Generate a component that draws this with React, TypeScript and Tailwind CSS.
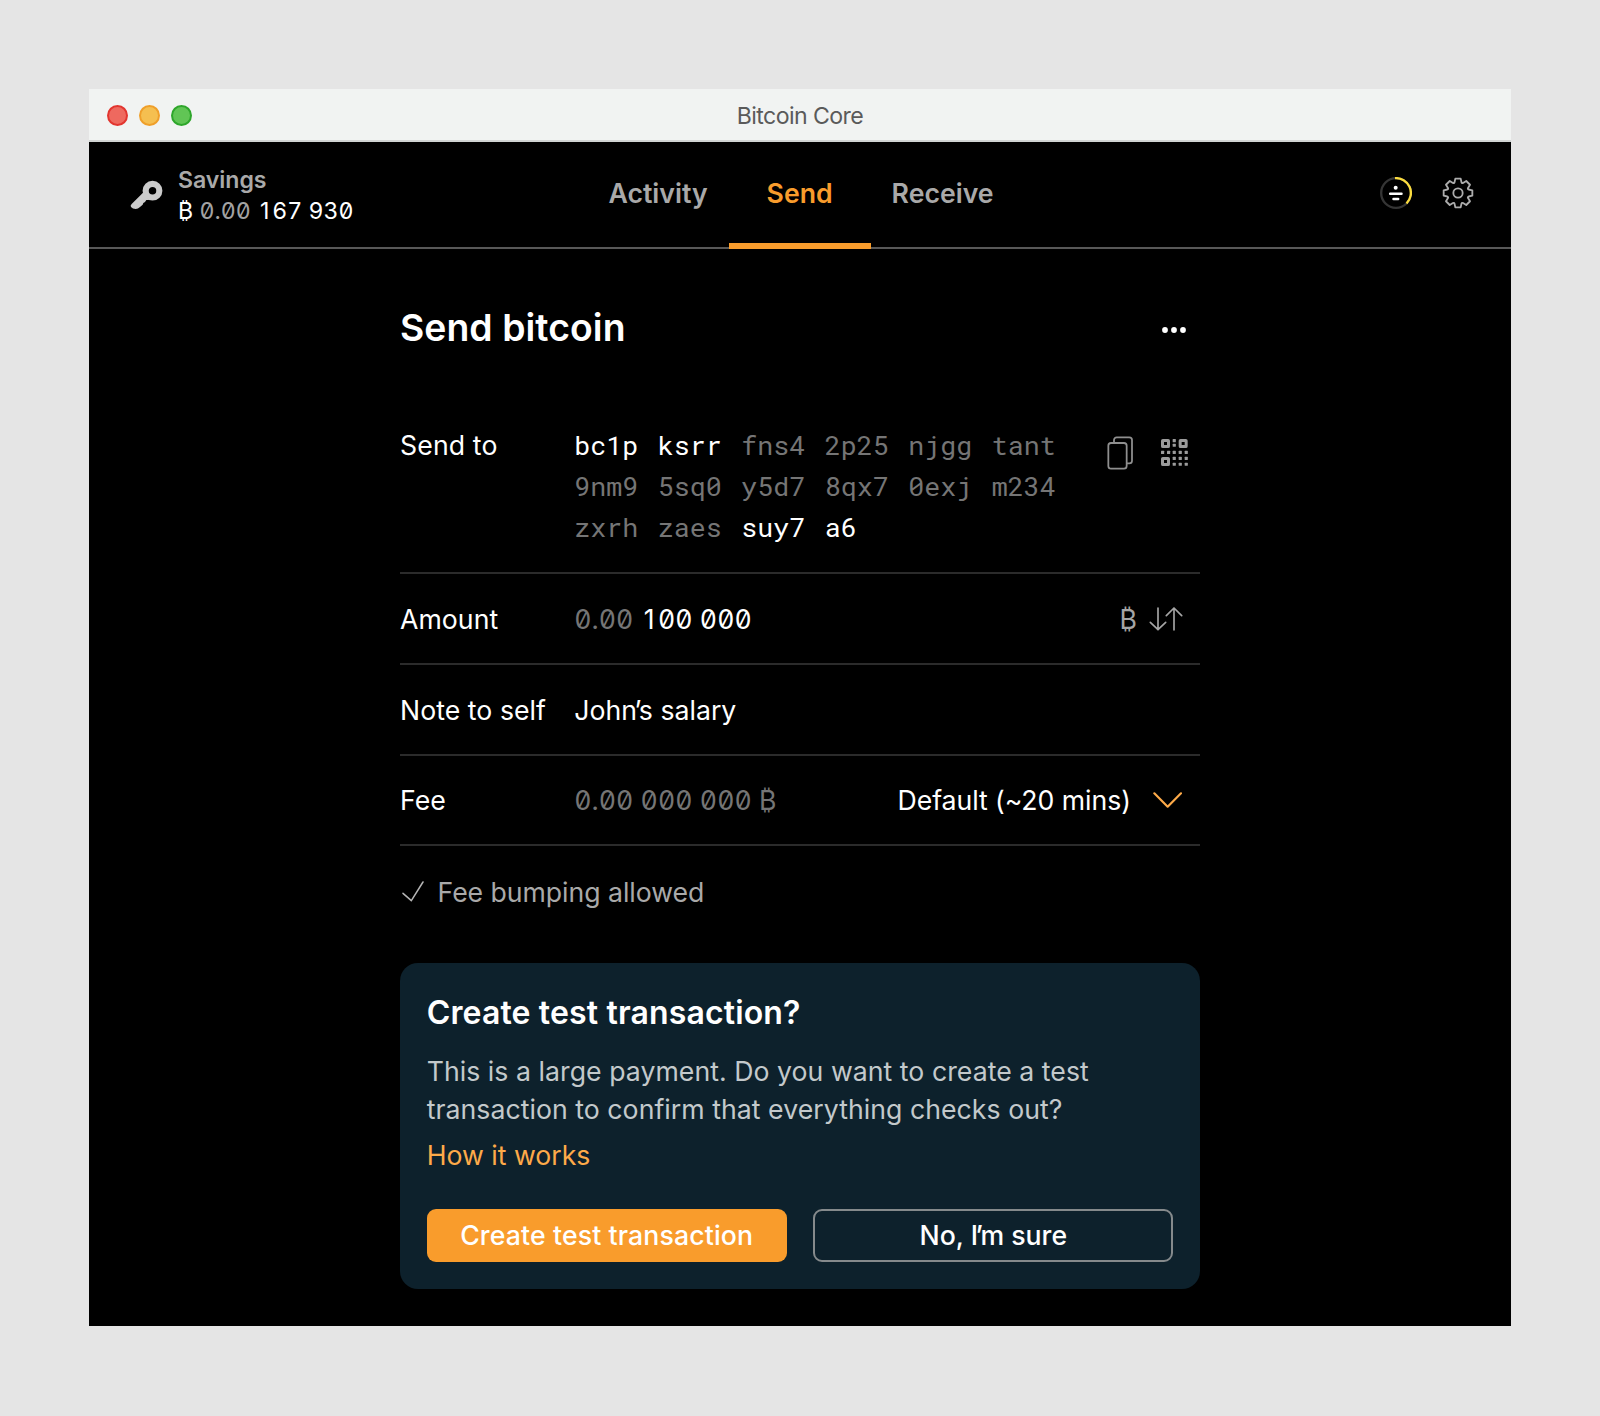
import type { ReactNode } from "react";

const trafficLights = [
  "bg-[#ee695f] border-[#e2352f]",
  "bg-[#f5bf50] border-[#ef9f2a]",
  "bg-[#61c555] border-[#2ea62b]",
];

const addressLines = [
  [["bc1p ksrr", true], ["fns4 2p25 njgg tant", false]],
  [["9nm9 5sq0 y5d7 8qx7 0exj m234", false]],
  [["zxrh zaes", false], ["suy7 a6", true]],
] as [string, boolean][][];

function KeyIcon() {
  return (
    <svg className="h-[30px] w-[34px]" viewBox="0 0 102 90" fill="#cbcbcb">
      <circle cx="67.500" cy="32" r="20.500" fill="none" stroke="#cbcbcb" strokeWidth="18.500" />
      <path d="M39 38L5 72Q0 77 3 81 8 87 17 87 24 87 30 81L38 74 40 69 45 66 49 60 58 60 50 52 42 30Z" />
    </svg>
  );
}

function SyncIcon() {
  return (
    <svg className="size-8" viewBox="0 0 96 96" fill="none" strokeLinecap="round">
      <circle cx="48" cy="48" r="44.500" stroke="#353535" strokeWidth="7" />
      <path d="M45 3.500a44.500 44.500 0 0 1 34.500 76" stroke="#fbdc3f" strokeWidth="7" strokeLinecap="butt" />
      <circle cx="47" cy="32" r="6" fill="#fff" />
      <path d="M30.500 50h34M40.500 66h14" stroke="#fff" strokeWidth="7.500" />
    </svg>
  );
}

const rotate = (x: number, y: number, degrees: number) => {
  const r = (degrees * Math.PI) / 180;
  return `${(x * Math.cos(r) - y * Math.sin(r)).toFixed(2)} ${(x * Math.sin(r) + y * Math.cos(r)).toFixed(2)}`;
};

const gearOutline =
  [0, 45, 90, 135, 180, 225, 270, 315]
    .map(
      (a, i) =>
        `${i ? "L" : "M"}${rotate(-8, -43, a)}L${rotate(8, -43, a)}L${rotate(10.5, -32, a)}Q${rotate(11.8, -28.5, a)} ${rotate(-10.5, -32, a + 45)}`,
    )
    .join("") + "Z";

function GearIcon() {
  return (
    <svg className="size-8" viewBox="-48 -48 96 96" fill="none" stroke="#acacac" strokeWidth="5.500" strokeLinejoin="round">
      <path d={gearOutline} />
      <circle r="14" />
    </svg>
  );
}

function MoreIcon() {
  return (
    <svg className="h-[6px] w-6" viewBox="0 0 24 6" fill="#fff">
      <circle cx="3" cy="3" r="2.900" />
      <circle cx="12" cy="3" r="2.900" />
      <circle cx="21" cy="3" r="2.900" />
    </svg>
  );
}

function CopyIcon() {
  return (
    <svg className="h-[34px] w-[26px]" viewBox="0 0 78 102" fill="none" stroke="#8f8f8f" strokeWidth="5.300">
      <rect x="4" y="21" width="55" height="77" rx="8" />
      <path d="M21 20v-8a8 8 0 0 1 8-8h38a8 8 0 0 1 8 8v62a8 8 0 0 1-8 8h-7" />
    </svg>
  );
}

const qrFinders = [[0, 0], [53, 0], [0, 54]];
const qrDots = [
  [35, 0], [35, 14],
  [0, 35.5], [18, 35.5], [35, 35.5], [53, 35.5], [71, 35.5],
  [35, 53.5], [53, 53.5], [71, 53.5],
  [35, 71], [53, 71], [71, 71],
];

function QrIcon() {
  return (
    <svg className="size-[27px]" viewBox="0 0 81 81">
      {qrFinders.map(([x, y]) => (
        <rect key={`${x}-${y}`} x={x + 4.5} y={y + 4.5} width="18" height="18" rx="1" fill="none" stroke="#9b9b9b" strokeWidth="9" strokeLinejoin="round" />
      ))}
      {qrDots.map(([x, y]) => (
        <rect key={`${x}-${y}`} x={x} y={y} width="9.500" height="9.500" rx="1.500" fill="#9b9b9b" />
      ))}
    </svg>
  );
}

function SwapIcon() {
  return (
    <svg className="h-6 w-[34px]" viewBox="0 0 102 72" fill="none" stroke="#a5a5a5" strokeWidth="5" strokeLinecap="round" strokeLinejoin="round">
      <path d="M27 3v65M4 46l23 22 23-22M75 69V3M52 26L75 3l23 23" />
    </svg>
  );
}

// A "1" without a foot that still occupies a full tabular cell.
function Digit1() {
  return <span className="inline-block w-[0.65em] text-center [font-feature-settings:'tnum'_0]">1</span>;
}

// The typographic apostrophe, set tight against its neighbours.
function Apostrophe() {
  return <span className="-ml-[2.500px] tracking-[-2.500px]">’</span>;
}

function Row({ label, children }: { label: string; children: ReactNode }) {
  return (
    <div className="flex h-[90.670px] items-center border-b-2 border-[#2b2b2b] pt-px text-[26.670px] leading-9 text-white">
      <div className="w-[174.200px] shrink-0 tracking-[0.050px]">{label}</div>
      {children}
    </div>
  );
}

export default function App() {
  return (
    <div className="h-[1416px] w-[1600px] bg-[#e5e5e5] pt-[89px] pl-[89px] font-['Inter',sans-serif]">
      <div className="flex h-[1237px] w-[1422px] flex-col bg-black">
        <div className="grid h-[53px] shrink-0 grid-cols-[1fr_auto_1fr] items-center border-b-2 border-[#d1d4d3] bg-[#f1f3f2]">
          <div className="flex gap-[10.500px] pt-[2px] pl-[17.500px]">
            {trafficLights.map((c) => (
              <div key={c} className={`size-[21.500px] rounded-full border-2 ${c}`} />
            ))}
          </div>
          <div className="pt-[3px] text-[23.110px] leading-8 tracking-[-0.580px] text-[#5a5a5a]">Bitcoin Core</div>
        </div>

        <div className="grid h-[107px] shrink-0 grid-cols-[1fr_auto_1fr] border-b-2 border-[#585858]">
          <div className="flex items-center pl-[41px]">
            <KeyIcon />
            <div className="ml-[14px] pt-px text-[23.110px]">
              <div className="leading-8 font-semibold tracking-[-0.050px] text-[#a9a9a9]">Savings</div>
              <div className="leading-[30px] tracking-[0.060px] text-white [font-feature-settings:'zero','tnum']">
                ₿ <span className="text-[#a3a3a3]">0.00</span> <Digit1 />67 930
              </div>
            </div>
          </div>
          <nav className="ml-[2px] grid grid-cols-[auto_142px_auto] gap-[21px] text-[26.670px] leading-[103px] font-semibold text-[#a9a9a9]">
            <div>Activity</div>
            <div className="relative text-center text-[#f99c2c]">
              Send
              <div className="absolute inset-x-0 top-[101px] h-[6px] bg-[#f99c2c]" />
            </div>
            <div>Receive</div>
          </nav>
          <div className="flex items-center justify-end gap-[30px] pr-[37px] pb-[4px]">
            <SyncIcon />
            <GearIcon />
          </div>
        </div>

        <main className="flex w-[800px] flex-col self-center">
          <div className="mt-[55px] flex h-12 items-center justify-between pr-[14px]">
            <h1 className="text-[37.330px] leading-[48px] font-semibold tracking-[0.060px] text-white">Send bitcoin</h1>
            <div className="pt-[4px]">
              <MoreIcon />
            </div>
          </div>

          <div className="mt-[72.700px] flex h-[149.500px] border-b-2 border-[#2b2b2b] text-[26.670px] leading-[41px] text-white">
            <div className="w-[174.200px] tracking-[0.120px]">Send to</div>
            <div className="-mt-px font-['Roboto_Mono',monospace] [word-spacing:3.550px]">
              {addressLines.map((line, i) => (
                <div key={i}>
                  {line.map(([text, strong], j) => (
                    <span key={text} className={strong ? "text-white" : "text-[#757575]"}>
                      {j > 0 && " "}
                      {text}
                    </span>
                  ))}
                </div>
              ))}
            </div>
            <div className="ml-auto flex items-start gap-[28px] pt-[11.500px] pr-[12px]">
              <CopyIcon />
              <div className="pt-[2.500px]">
                <QrIcon />
              </div>
            </div>
          </div>

          <Row label="Amount">
            <div className="tracking-[0.050px] [font-feature-settings:'zero','tnum']">
              <span className="text-[#757575]">0.00</span> <Digit1 />00 000
            </div>
            <div className="ml-auto flex items-center gap-[11.500px] pr-[17.500px] text-[#a5a5a5]">
              ₿
              <SwapIcon />
            </div>
          </Row>
          <Row label="Note to self">
            <div>
              John
              <Apostrophe />s salary
            </div>
          </Row>
          <Row label="Fee">
            <div className="tracking-[0.050px] text-[#757575] [font-feature-settings:'zero','tnum']">0.00 000 000 ₿</div>
            <div className="ml-auto flex items-center gap-[22.500px] pr-[17.700px] tracking-[-0.060px]">
              Default (~20 mins)
              <svg className="h-4 w-[29px]" viewBox="0 0 87 48" fill="none" stroke="#fdaa49" strokeWidth="6.500" strokeLinecap="round" strokeLinejoin="round">
                <path d="M4 4l40 40L84 4" />
              </svg>
            </div>
          </Row>

          <div className="flex h-[90px] items-center gap-[13.500px] pt-px pl-[2px] text-[26.670px] leading-9 tracking-[-0.050px] text-[#a9a9a9]">
            <svg className="h-[21px] w-[22px]" viewBox="0 0 66 63" fill="none" stroke="#b5b5b5" strokeWidth="4.500" strokeLinecap="round" strokeLinejoin="round">
              <path d="M3 37l25 22L63 3" />
            </svg>
            Fee bumping allowed
          </div>

          <section className="mt-[27px] flex h-[326px] flex-col rounded-[18px] bg-[#0d212c] px-[26.670px] pt-[30px]">
            <h2 className="text-[32px] leading-10 font-semibold tracking-[0.150px] text-white">Create test transaction?</h2>
            <p className="mt-[20.200px] text-[26.670px] leading-[37.330px] tracking-[0.040px] text-[#c3c9cb]">
              This is a large payment. Do you want to create a test
              <br />
              transaction to confirm that everything checks out?
            </p>
            <a className="mt-[8.500px] text-[26.670px] leading-[37.330px] text-[#fdaa49]">How it works</a>
            <div className="mt-[35px] grid grid-cols-2 gap-[26.670px] text-[26.670px] leading-[48px] font-medium text-white">
              <button className="h-[53.500px] rounded-[9px] bg-[#f99c2c] pb-px tracking-[0.120px]">Create test transaction</button>
              <button className="h-[53.500px] rounded-[9px] border-2 border-[#858a8c] pb-px">
                No, I
                <Apostrophe />m sure
              </button>
            </div>
          </section>
        </main>
      </div>
    </div>
  );
}
